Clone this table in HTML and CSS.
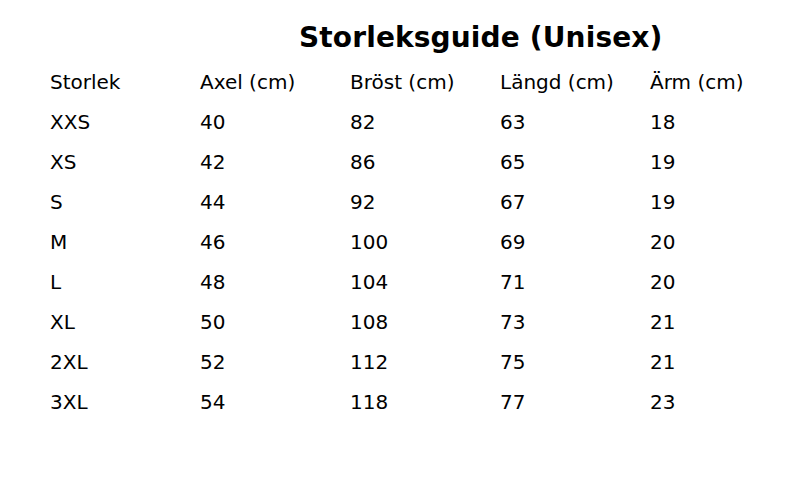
FILE: index.html
```html
<!DOCTYPE html>
<html lang="sv">
<head>
<meta charset="utf-8">
<title>Storleksguide</title>
<link rel="stylesheet" href="styles.css">
</head>
<body>
<main class="page">
  <h1 class="title">Storleksguide (Unisex)</h1>
  <div class="table">
    <div class="row"><span>Storlek</span><span>Axel (cm)</span><span>Bröst (cm)</span><span>Längd (cm)</span><span>Ärm (cm)</span></div>
    <div class="row"><span>XXS</span><span>40</span><span>82</span><span>63</span><span>18</span></div>
    <div class="row"><span>XS</span><span>42</span><span>86</span><span>65</span><span>19</span></div>
    <div class="row"><span>S</span><span>44</span><span>92</span><span>67</span><span>19</span></div>
    <div class="row"><span>M</span><span>46</span><span>100</span><span>69</span><span>20</span></div>
    <div class="row"><span>L</span><span>48</span><span>104</span><span>71</span><span>20</span></div>
    <div class="row"><span>XL</span><span>50</span><span>108</span><span>73</span><span>21</span></div>
    <div class="row"><span>2XL</span><span>52</span><span>112</span><span>75</span><span>21</span></div>
    <div class="row"><span>3XL</span><span>54</span><span>118</span><span>77</span><span>23</span></div>
  </div>
</main>
</body>
</html>
```

FILE: styles.css
```css
html, body {
  margin: 0;
  padding: 0;
  background: #ffffff;
}
body {
  width: 800px;
  height: 500px;
  font-family: "DejaVu Sans", sans-serif;
  color: #000000;
}
.page {
  padding-top: 18px;
}
.title {
  margin: 0 0 0 299px;
  font-size: 28px;
  font-weight: bold;
  letter-spacing: 0.14px;
  line-height: 40px;
  white-space: nowrap;
}
.table {
  margin-top: 4px;
  padding-left: 50px;
}
.row {
  display: grid;
  grid-template-columns: repeat(5, 150px);
  height: 40px;
  line-height: 40px;
  font-size: 20px;
}
.row span {
  white-space: nowrap;
}
```
